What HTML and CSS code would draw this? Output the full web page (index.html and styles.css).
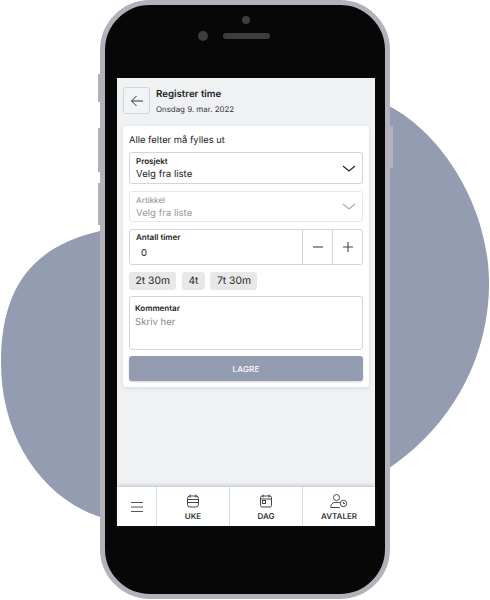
FILE: index.html
```html
<!DOCTYPE html>
<html lang="no">
<head>
<meta charset="utf-8">
<title>Registrer time</title>
<link rel="stylesheet" href="styles.css">
</head>
<body>
<div class="stage">
  <svg class="blob" width="490" height="600" viewBox="0 0 490 600"><path d="M385 104 C440 130 489 205 489 283 C489 365 445 432 385 471 L385 300 L100 517 C40 497 1 435 1 363 C1 290 30 247 100 231 L385 231 Z" fill="#939cb0"/></svg>
  <span class="side side-a"></span><span class="side side-b"></span><span class="side side-c"></span><span class="side side-d"></span>
  <div class="phone">
    <div class="bezel">
      <div class="top">
        <span class="cam"></span>
        <div class="sensors"><span class="lens"></span><span class="speaker"></span></div>
      </div>
      <div class="screen">
        <header class="head">
          <button class="back"><svg width="14" height="12" viewBox="0 0 14 12"><path d="M13 6H1.500M6.500 1 1.500 6l5 5" fill="none" stroke="#333" stroke-width="1"/></svg></button>
          <div class="head-text">
            <div class="title">Registrer time</div>
            <div class="sub">Onsdag 9. mar. 2022</div>
          </div>
        </header>
        <main class="card">
          <p class="note">Alle felter må fylles ut</p>
          <div class="field select">
            <div><div class="label">Prosjekt</div><div class="value">Velg fra liste</div></div>
            <svg width="14" height="7" viewBox="0 0 14 7"><path d="M1 1l6 5 6-5" fill="none" stroke="#222" stroke-width="1.100"/></svg>
          </div>
          <div class="field select off">
            <div><div class="label">Artikkel</div><div class="value">Velg fra liste</div></div>
            <svg width="14" height="7" viewBox="0 0 14 7"><path d="M1 1l6 5 6-5" fill="none" stroke="#aaa" stroke-width="1.100"/></svg>
          </div>
          <div class="field count">
            <div class="count-main"><div class="label">Antall timer</div><div class="value num">0</div></div>
            <div class="step"><svg width="12" height="12" viewBox="0 0 12 12"><path d="M1 6h10" stroke="#444" stroke-width="1.100"/></svg></div>
            <div class="step"><svg width="12" height="12" viewBox="0 0 12 12"><path d="M1 6h10M6 1v10" stroke="#444" stroke-width="1.100"/></svg></div>
          </div>
          <div class="chips"><span class="chip">2t 30m</span><span class="chip">4t</span><span class="chip">7t 30m</span></div>
          <div class="field comment">
            <div class="label">Kommentar</div>
            <div class="value hint">Skriv her</div>
          </div>
          <button class="save">LAGRE</button>
        </main>
        <nav class="nav">
          <div class="cell menu"><svg width="12" height="10" viewBox="0 0 12 10"><path d="M0 .5h12M0 5h12M0 9.500h12" stroke="#555" stroke-width="1"/></svg></div>
          <div class="cell">
            <svg width="14" height="14" viewBox="0 0 14 14" fill="none" stroke="#444" stroke-width="1"><rect x="1.500" y="2" width="11" height="11" rx="2.500"/><path d="M4 .5v3M10 .5v3M1.500 5.500h11M1.500 8.500h11"/></svg>
            <span>UKE</span>
          </div>
          <div class="cell">
            <svg width="14" height="14" viewBox="0 0 14 14" fill="none" stroke="#444" stroke-width="1"><rect x="1.500" y="2" width="11" height="11" rx="1.500"/><path d="M4 .5v3M10 .5v3M1.500 5h11"/><rect x="3.500" y="6.500" width="3" height="3"/></svg>
            <span>DAG</span>
          </div>
          <div class="cell">
            <svg width="18" height="14" viewBox="0 0 18 14" fill="none" stroke="#444" stroke-width="1"><circle cx="6.500" cy="3.500" r="3"/><path d="M.8 13.500v-1c0-2.500 2-4 4.500-4h3c1 0 1.700.2 2.200.6M.8 13.500h9"/><circle cx="13.500" cy="9.500" r="3.200"/><path d="M13.500 8v1.500h1.500"/></svg>
            <span>AVTALER</span>
          </div>
        </nav>
      </div>
    </div>
  </div>
</div>
</body>
</html>
```
FILE: styles.css
```css
* { box-sizing: border-box; }
html, body { margin: 0; padding: 0; background: #fff; }
body { font-family: Inter, "Liberation Sans", sans-serif; color: #1d1d1f; text-rendering: geometricPrecision; }
.stage { position: relative; width: 490px; height: 600px; overflow: hidden; }
.blob { position: absolute; left: 0; top: 0; }
.side { position: absolute; background: #b5b1ba; }
.side-a { left: 98px; top: 74px; width: 4px; height: 28px; }
.side-b { left: 98px; top: 128px; width: 4px; height: 44px; }
.side-c { left: 98px; top: 183px; width: 4px; height: 42px; }
.side-d { left: 388px; top: 126px; width: 5px; height: 42px; }
.phone { position: absolute; left: 100px; top: 0; width: 290px; height: 599px; border: 5px solid #b5b1ba; border-radius: 50px; background: #070707; }
.bezel { display: flex; flex-direction: column; height: 100%; padding: 0 10px 68px 12px; }
.top { height: 73px; display: flex; flex-direction: column; align-items: center; padding-top: 11px; }
.cam { width: 8px; height: 8px; border-radius: 50%; background: #3d3d3d; }
.sensors { display: flex; align-items: center; gap: 15px; margin: 7px 0 0 -24px; }
.lens { width: 10px; height: 10px; border-radius: 50%; background: #3d3d3d; }
.speaker { width: 47px; height: 6px; border-radius: 3px; background: #3d3d3d; }
.screen { flex: 1; display: flex; flex-direction: column; background: #eff1f3; padding-top: 9px; }
.head { display: flex; align-items: flex-start; gap: 6px; padding: 0 6px; height: 27px; }
.back { width: 27px; height: 27px; padding: 0; display: flex; align-items: center; justify-content: center; background: #f1f3f5; border: 1px solid #cdd6e0; border-radius: 3px; }
.head-text { padding-top: 1px; }
.title { font-size: 9.700px; font-weight: 600; line-height: 14px; }
.sub { font-size: 7.900px; line-height: 12px; margin-top: 1px; color: #333; }
.card { margin: 12px 6px 0; height: 261px; padding: 8px 6px 0; background: #fff; border-radius: 3px; box-shadow: 0 1px 4px rgba(60,70,90,.12); display: flex; flex-direction: column; }
.note { margin: 0 0 4px; font-size: 9.400px; line-height: 14px; color: #222; }
.field { border: 1px solid #cfd6e0; border-radius: 3px; background: #fff; }
.select { height: 32px; margin-bottom: 7px; padding: 2px 6px 0; display: flex; align-items: center; justify-content: space-between; }
.label { font-size: 8px; font-weight: 600; line-height: 11px; color: #222; }
.value { font-size: 9.600px; line-height: 15px; color: #222; }
.off { height: 31px; border-color: #e3e7ed; }
.off .label { color: #999; font-weight: 500; }
.off .value { color: #999; }
.select > svg { margin-top: -2px; }
.count { height: 36px; display: flex; margin-bottom: 7px; }
.count-main { flex: 1; padding: 2px 6px 0; }
.num { margin: 3px 0 0 5px; }
.step { width: 30px; display: flex; align-items: center; justify-content: center; border-left: 1px solid #cfd6e0; }
.chips { display: flex; gap: 5.500px; height: 18px; margin-bottom: 6px; }
.chip { display: flex; align-items: center; padding: 0 6.500px; background: #e8e8e8; border-radius: 3px; font-size: 10.300px; color: #222; }
.comment { height: 54px; padding: 6px 5px 0; margin-bottom: 6px; }
.hint { color: #888; margin-top: 1px; }
.save { height: 25px; border: 0; border-radius: 3px; background: #939cb0; color: #f4f5f7; font: 600 8px Inter, "Liberation Sans", sans-serif; letter-spacing: .2px; box-shadow: 0 1px 2px rgba(40,50,70,.2); }
.nav { margin-top: auto; height: 39px; display: flex; background: #fff; box-shadow: 0 -1px 4px rgba(60,80,110,.3); }
.cell { width: 73px; display: flex; flex-direction: column; align-items: center; justify-content: flex-end; gap: 3px; padding-bottom: 4px; border-left: 1px solid #d5dde6; font-size: 8px; font-weight: 600; line-height: 11px; color: #333; }
.menu { width: 39px; justify-content: center; padding: 0; border-left: 0; }
```
